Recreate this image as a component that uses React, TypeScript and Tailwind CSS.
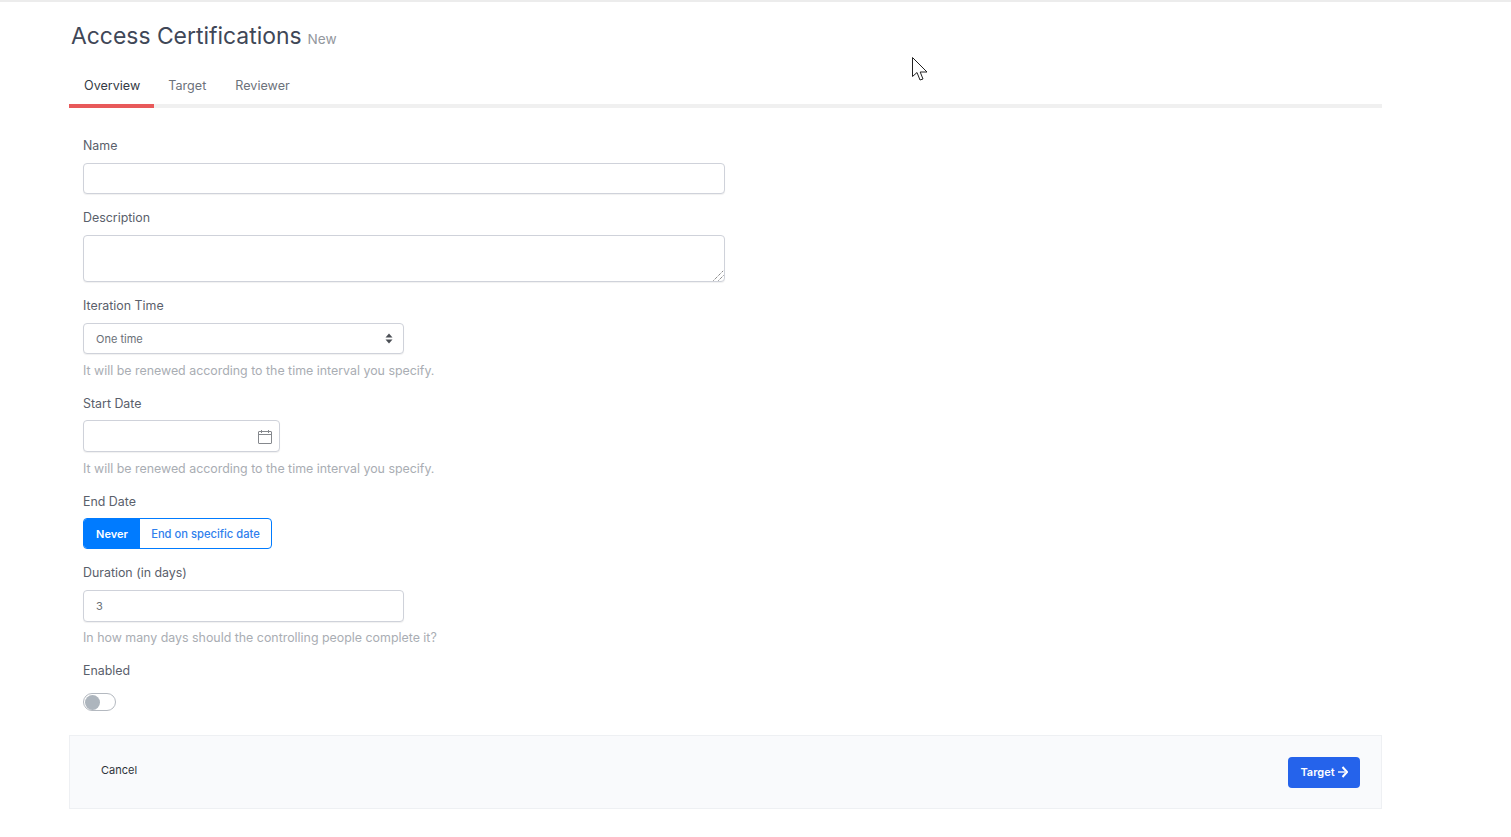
import React from "react";

const label = "block h-[20px] pt-[1px] text-[12.4px] leading-[20px] text-[#5a606b]";
const help = "mt-[6px] h-[20px] pt-[1px] text-[12.4px] leading-[20px] text-[#a9adb3]";
const field =
  "block h-[31px] rounded-[4px] border border-[#cfd2da] bg-white px-3 text-[11px] text-[#6a7078] shadow-[0_1px_1px_rgba(0,0,0,0.06)] outline-none";
const tab = "pt-[3px] text-[12.6px] leading-[20px]";

function CalendarIcon() {
  return (
    <svg className="mt-[1px]" width="14" height="14" viewBox="0 0 14 14" fill="none" stroke="#85888d" strokeWidth="1">
      <rect x="0.5" y="1.5" width="13" height="12" rx="0.5" />
      <path d="M0.5 4.5h13M3.5 0v3M10.5 0v3" />
    </svg>
  );
}

function SelectArrows() {
  return (
    <svg width="8" height="11" viewBox="0 0 8 11" fill="#4b4f55">
      <path d="M4 0.5 7.5 4.5H0.5Z" />
      <path d="M4 10.5 0.5 6.5H7.5Z" />
    </svg>
  );
}

function MouseCursor() {
  return (
    <svg width="16" height="24" viewBox="0 0 16 24" fill="white" stroke="#222" strokeWidth="1">
      <path d="M0.5 0.5V19.5L5 15.5L8 23L11 22L8.2 15L15 15Z" />
    </svg>
  );
}

export default function App() {
  return (
    <div className="relative min-h-[837px] bg-white font-['Inter',sans-serif]">
      <div className="h-[2px] bg-[#ececec]" />
      <div className="ml-[69px] w-[1313px]">
        {/* Header */}
        <div className="flex items-baseline gap-[6px] pl-[2px] pt-[19px]">
          <h1 className="text-[22.9px] leading-[30px] font-normal text-[#3f4757]">Access Certifications</h1>
          <span className="text-[13.6px] text-[#93979d]">New</span>
        </div>

        {/* Tabs */}
        <div className="mt-[22px] flex h-[35px] border-b-[4px] border-[#f0f0f0]">
          <div className={`${tab} h-[35px] border-b-[4px] border-[#e8595a] pl-[15px] pr-[14px] text-[#333a45]`}>Overview</div>
          <div className={`${tab} pl-[14px] pr-[15px] text-[#6c727b]`}>Target</div>
          <div className={`${tab} px-[14px] text-[#6c727b]`}>Reviewer</div>
        </div>

        {/* Form */}
        <form className="pl-[14px] pt-[27px]">
          <label className={label}>Name</label>
          <input className={`${field} mt-[8px] w-[642px]`} />

          <label className={`${label} mt-[13px]`}>Description</label>
          <div className="relative mt-[8px] w-[642px]">
            <textarea className="block h-[47px] w-full resize-none rounded-[4px] border border-[#cfd2da] bg-white px-3 text-[11px] shadow-[0_1px_1px_rgba(0,0,0,0.06)] outline-none" />
            <svg className="absolute bottom-[1px] right-[1px]" width="11" height="11" viewBox="0 0 11 11" fill="none" stroke="#555" strokeWidth="1" strokeDasharray="1 1">
              <path d="M0.5 10.5 10.5 0.5M5.5 10.5 10.5 5.5" />
            </svg>
          </div>

          <label className={`${label} mt-[13px]`}>Iteration Time</label>
          <div className={`${field} mt-[8px] flex w-[321px] items-center justify-between pr-[10px]`}>
            <span className="pt-[2px]">One time</span>
            <SelectArrows />
          </div>
          <p className={help}>It will be renewed according to the time interval you specify.</p>

          <label className={`${label} mt-[13px]`}>Start Date</label>
          <div className={`${field} mt-[7px] flex h-[32px] w-[197px] items-center justify-end pr-[7px]`}>
            <CalendarIcon />
          </div>
          <p className={help}>It will be renewed according to the time interval you specify.</p>

          <label className={`${label} mt-[13px]`}>End Date</label>
          <div className="mt-[7px] flex h-[31px] w-[189px] overflow-hidden rounded-[4px] border border-[#007bff] text-[11.2px] font-medium">
            <div className="flex w-[56px] items-center justify-center bg-[#007bff] pt-[1px] text-[11px] font-semibold text-white">Never</div>
            <div className="flex flex-1 items-center justify-center pt-[1px] text-[#2f80ed]">End on specific date</div>
          </div>

          <label className={`${label} mt-[13px]`}>Duration (in days)</label>
          <input className={`${field} mt-[8px] h-[32px] w-[321px]`} defaultValue="3" />
          <p className="mt-[5px] h-[20px] pt-[1px] text-[12.4px] leading-[20px] text-[#a9adb3]">In how many days should the controlling people complete it?</p>

          <label className={`${label} mt-[13px]`}>Enabled</label>
          <div className="mt-[13px] flex h-[18px] w-[33px] items-center rounded-full border border-[#b4b9c0] bg-white pl-[1px]">
            <div className="h-[15px] w-[15px] rounded-full bg-[#adb5bd]" />
          </div>
        </form>

        {/* Footer */}
        <div className="mt-[24px] flex h-[74px] items-center justify-between border border-[#eef0f3] bg-[#f9fafc] pl-[31px] pr-[21px]">
          <button className="-mt-[4px] text-[11px] font-normal text-[#2f343b]">Cancel</button>
          <button className="flex h-[31px] w-[72px] items-center justify-center gap-[3px] rounded-[4px] bg-[#2563eb] text-[11px] font-semibold text-white">
            Target
            <svg width="10" height="12" viewBox="0 0 10 12" fill="none" strokeWidth="2">
              <path d="M0 6H7" stroke="#b9cdf8" />
              <path d="M4.5 1l4.5 5-4.5 5" stroke="#ffffff" />
            </svg>
          </button>
        </div>
      </div>

      {/* Mouse pointer caught in the shot */}
      <div className="absolute left-[912px] top-[57px]">
        <MouseCursor />
      </div>
    </div>
  );
}
